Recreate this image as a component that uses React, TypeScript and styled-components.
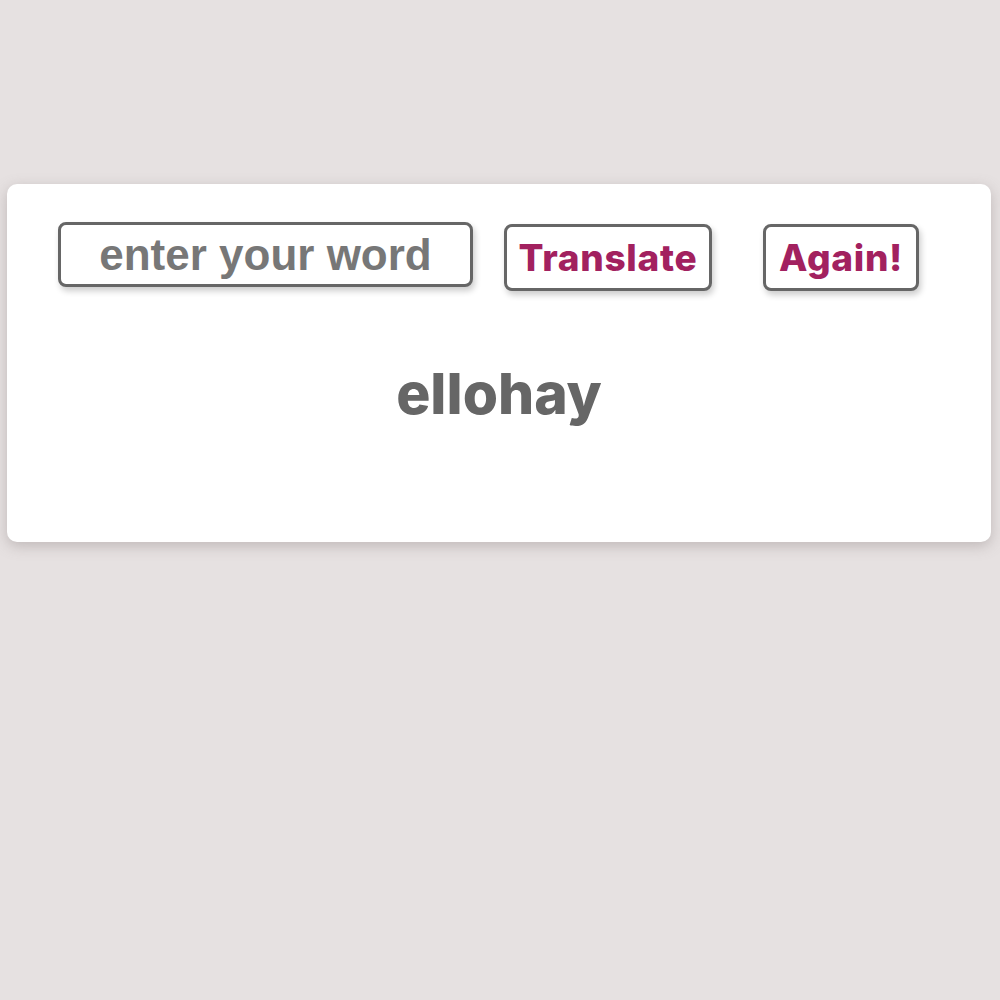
import React from "react";
import styled, { createGlobalStyle } from "styled-components";

const Global = createGlobalStyle`
  html, body { margin: 0; padding: 0; }
  body {
    background: #e6e1e1;
    min-height: 1000px;
    padding-top: 184px;
    box-sizing: border-box;
  }
`;

const Card = styled.div`
  margin: 0 9px 0 7px;
  height: 358px;
  box-sizing: border-box;
  background: #ffffff;
  border-radius: 10px;
  box-shadow: 0 4px 14px rgba(120, 110, 110, 0.35);
  padding-top: 38px;
  display: flex;
  flex-direction: column;
  align-items: center;
`;

const Controls = styled.div`
  display: flex;
  align-items: flex-start;
  align-self: flex-start;
  margin-left: 51px;
`;

const WordInput = styled.input`
  width: 415px;
  height: 65px;
  box-sizing: border-box;
  border: 3px solid #666666;
  border-radius: 8px;
  box-shadow: 2px 4px 6px rgba(0, 0, 0, 0.2);
  font-family: "Liberation Sans", Arial, sans-serif;
  font-weight: 700;
  font-size: 44px;
  text-align: center;
  color: #777777;
  outline: none;
  padding: 0;
  &::placeholder {
    font-family: "Liberation Sans", Arial, sans-serif;
    font-weight: 700;
    color: #777777;
    opacity: 1;
  }
`;

const Button = styled.button<{ $gap: number; $width: number }>`
  margin-left: ${(p) => p.$gap}px;
  margin-top: 2px;
  width: ${(p) => p.$width}px;
  height: 67px;
  box-sizing: border-box;
  padding: 0;
  background: #ffffff;
  border: 3px solid #666666;
  border-radius: 8px;
  box-shadow: 2px 4px 6px rgba(0, 0, 0, 0.2);
  font-family: Inter, "Noto Sans", sans-serif;
  font-weight: 800;
  font-size: 37px;
  letter-spacing: 0.7px;
  color: #a2215f;
  cursor: pointer;
`;

const Result = styled.div`
  margin-top: 74px;
  font-family: Inter, "Noto Sans", sans-serif;
  font-weight: 800;
  font-size: 57px;
  color: #666666;
  line-height: 1;
`;

export default function App() {
  return (
    <>
      <Global />
      <Card>
        <Controls>
          <WordInput placeholder="enter your word" />
          <Button $gap={31} $width={208}>Translate</Button>
          <Button $gap={51} $width={156}>Again!</Button>
        </Controls>
        <Result>ellohay</Result>
      </Card>
    </>
  );
}
